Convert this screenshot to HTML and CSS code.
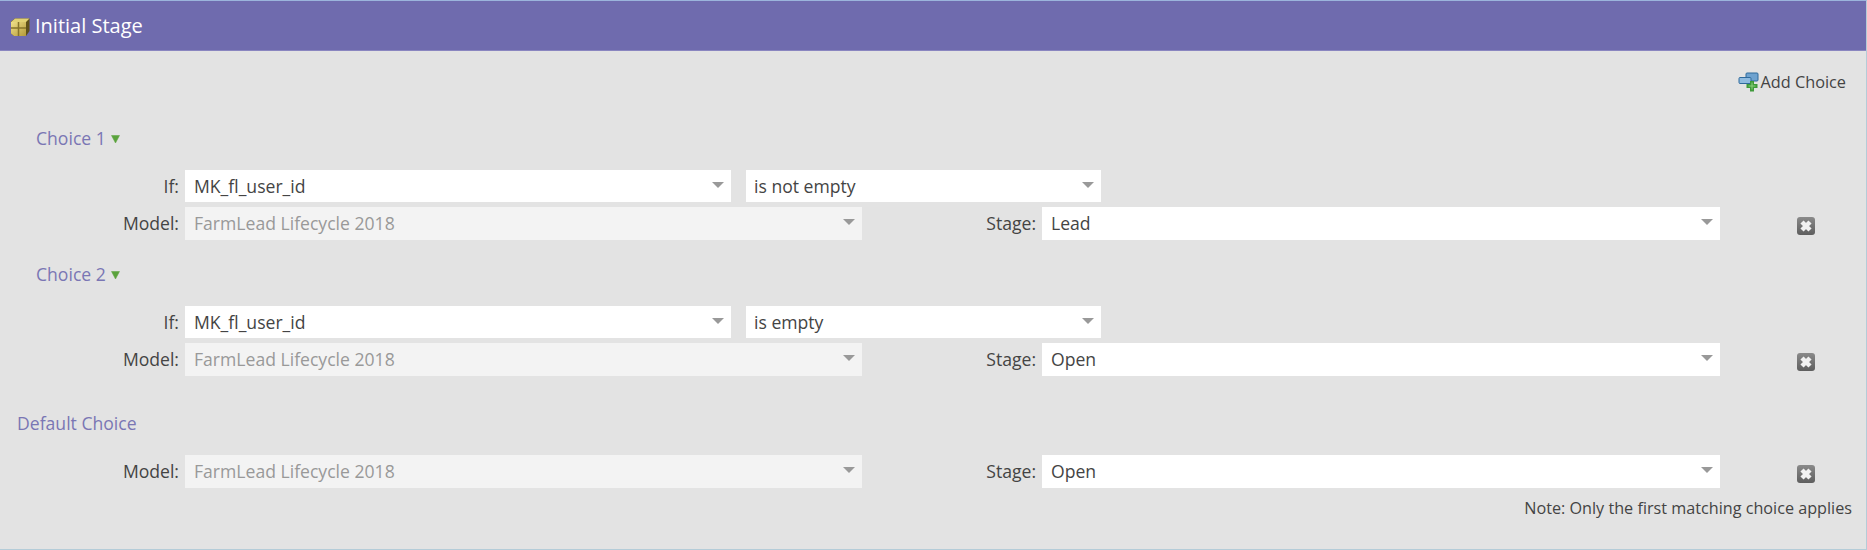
FILE: index.html
```html
<!DOCTYPE html>
<html lang="en">
<head>
<meta charset="utf-8">
<title>Initial Stage</title>
<link rel="stylesheet" href="styles.css">
</head>
<body>
<div class="panel">
  <header class="head">
    <svg class="cube" width="20" height="20" viewBox="0 0 20 20"><defs><linearGradient id="gold" x1="0" y1="0" x2="1" y2="1"><stop offset="0" stop-color="#efe08a"/><stop offset="1" stop-color="#b49a38"/></linearGradient></defs><path d="M1 4.500L5 1.500h14.500V14l-3.500 5H4l-3-2.500z" fill="#5e5018"/><path d="M1 5h15v14H4l-3-2.500z" fill="url(#gold)"/><path d="M5 1.500h14.500L16 5H1z" fill="#e2d274"/><path d="M1 11h15M8.500 5v14" stroke="#86742a" stroke-width="1.500" fill="none"/></svg>
    <h1 class="title">Initial Stage</h1>
  </header>
  <div class="body">
    <div class="actions">
      <svg class="add-icon" width="22" height="20" viewBox="0 0 22 20"><rect x="8" y="1" width="12" height="8" rx="1" fill="#6ea2cf" stroke="#2f6a9c"/><rect x="1" y="5.500" width="12" height="6" rx="1" fill="#8fbbe0" stroke="#2f6a9c"/><path d="M12 9h4v3h3.500v4H16v3.500h-4V16H8.500v-4H12z" fill="#3f9a3b"/><path d="M14 10.500v7M10.500 14h7" stroke="#8fd07f" stroke-width="1"/></svg>
      <span>Add Choice</span>
    </div>

    <div class="choice-head">Choice 1 <svg class="caret" width="9" height="8" viewBox="0 0 9 8"><path d="M0.500 0.500h8L4.500 8z" fill="#5aa33c" stroke="#5aa33c" stroke-linejoin="round" stroke-width="0.500"/></svg></div>
    <div class="row row-if">
      <span class="label">If:</span>
      <div class="select w-field"><span>MK_fl_user_id</span><i class="arrow"></i></div>
      <div class="select w-op"><span>is not empty</span><i class="arrow"></i></div>
    </div>
    <div class="row row-model">
      <span class="label">Model:</span>
      <div class="select disabled w-model"><span>FarmLead Lifecycle 2018</span><i class="arrow"></i></div>
      <span class="label stage-label">Stage:</span>
      <div class="select w-stage"><span>Lead</span><i class="arrow"></i></div>
      <svg class="remove" width="18" height="18" viewBox="0 0 18 18"><defs><linearGradient id="grey" x1="0" y1="0" x2="0" y2="1"><stop offset="0" stop-color="#8a8a8a"/><stop offset="1" stop-color="#5e5e5e"/></linearGradient></defs><rect width="18" height="18" rx="3" fill="url(#grey)"/><path d="M5 5l8 8M13 5l-8 8" stroke="#f2f2f2" stroke-width="4.500"/></svg>
    </div>

    <div class="choice-head second">Choice 2 <svg class="caret" width="9" height="8" viewBox="0 0 9 8"><path d="M0.500 0.500h8L4.500 8z" fill="#5aa33c" stroke="#5aa33c" stroke-linejoin="round" stroke-width="0.500"/></svg></div>
    <div class="row row-if">
      <span class="label">If:</span>
      <div class="select w-field"><span>MK_fl_user_id</span><i class="arrow"></i></div>
      <div class="select w-op"><span>is empty</span><i class="arrow"></i></div>
    </div>
    <div class="row row-model">
      <span class="label">Model:</span>
      <div class="select disabled w-model"><span>FarmLead Lifecycle 2018</span><i class="arrow"></i></div>
      <span class="label stage-label">Stage:</span>
      <div class="select w-stage"><span>Open</span><i class="arrow"></i></div>
      <svg class="remove" width="18" height="18" viewBox="0 0 18 18"><rect width="18" height="18" rx="3" fill="url(#grey)"/><path d="M5 5l8 8M13 5l-8 8" stroke="#f2f2f2" stroke-width="4.500"/></svg>
    </div>

    <div class="choice-head default">Default Choice</div>
    <div class="row row-model default-row">
      <span class="label">Model:</span>
      <div class="select disabled w-model"><span>FarmLead Lifecycle 2018</span><i class="arrow"></i></div>
      <span class="label stage-label">Stage:</span>
      <div class="select w-stage"><span>Open</span><i class="arrow"></i></div>
      <svg class="remove" width="18" height="18" viewBox="0 0 18 18"><rect width="18" height="18" rx="3" fill="url(#grey)"/><path d="M5 5l8 8M13 5l-8 8" stroke="#f2f2f2" stroke-width="4.500"/></svg>
    </div>
    <p class="note">Note: Only the first matching choice applies</p>
  </div>
</div>
</body>
</html>
```
FILE: styles.css
```css
* { box-sizing: border-box; }
html, body { margin: 0; height: 100%; }
body { font-family: "Open Sans", "Liberation Sans", sans-serif; font-size: 17.6px; color: #444; background: #e3e3e3; }
.panel { height: 550px; display: flex; flex-direction: column; border-top: 1px solid #9bb4dc; border-right: 1px solid #b4ccd8; border-bottom: 1px solid #b4ccd8; overflow: hidden; }
.head { height: 50px; flex: none; background: #6f6bae; border-bottom: 1px solid #8a86c0; display: flex; align-items: center; padding-left: 10px; gap: 5px; }
.cube { display: block; margin-top: 2px; }
.title { margin: 0; font-size: 20px; font-weight: 400; color: #fff; }
.body { flex: 1; display: flex; flex-direction: column; }
.actions { height: 20px; margin-top: 21px; display: flex; align-items: center; justify-content: flex-end; padding-right: 20px; font-size: 16.3px; color: #444; }
.choice-head { height: 24px; margin-top: 34px; padding-left: 36px; line-height: 24px; color: #7a76b4; display: flex; align-items: center; gap: 5px; }
.choice-head.second { margin-top: 22px; }
.choice-head.default { margin-top: 35px; padding-left: 17px; }
.caret { display: block; margin-top: 2px; }
.row { display: flex; align-items: center; }
.row-if { height: 32px; margin-top: 20px; }
.row-model { height: 33px; margin-top: 5px; }
.row-model .select { padding-bottom: 2px; }
.default-row { margin-top: 20px; }
.label { width: 179px; text-align: right; flex: none; margin-right: 6px; }
.row-model .label { padding-bottom: 2px; }
.select { height: 100%; background: #fff; display: flex; align-items: center; justify-content: space-between; padding: 0 7px 0 9px; flex: none; }
.select.disabled { background: #f3f3f3; color: #999; }
.w-field { width: 546px; }
.w-op { width: 355px; margin-left: 15px; padding-left: 8px; }
.w-model { width: 677px; }
.w-stage { width: 678px; }
.stage-label { width: 174px; }
.arrow { width: 0; height: 0; border-left: 6px solid transparent; border-right: 6px solid transparent; border-top: 6px solid #999; margin-top: -2px; }
.remove { display: block; margin-left: 77px; margin-top: 4px; }
.note { margin: 8px 14px 0 0; text-align: right; font-size: 16.2px; line-height: 24px; }
```
